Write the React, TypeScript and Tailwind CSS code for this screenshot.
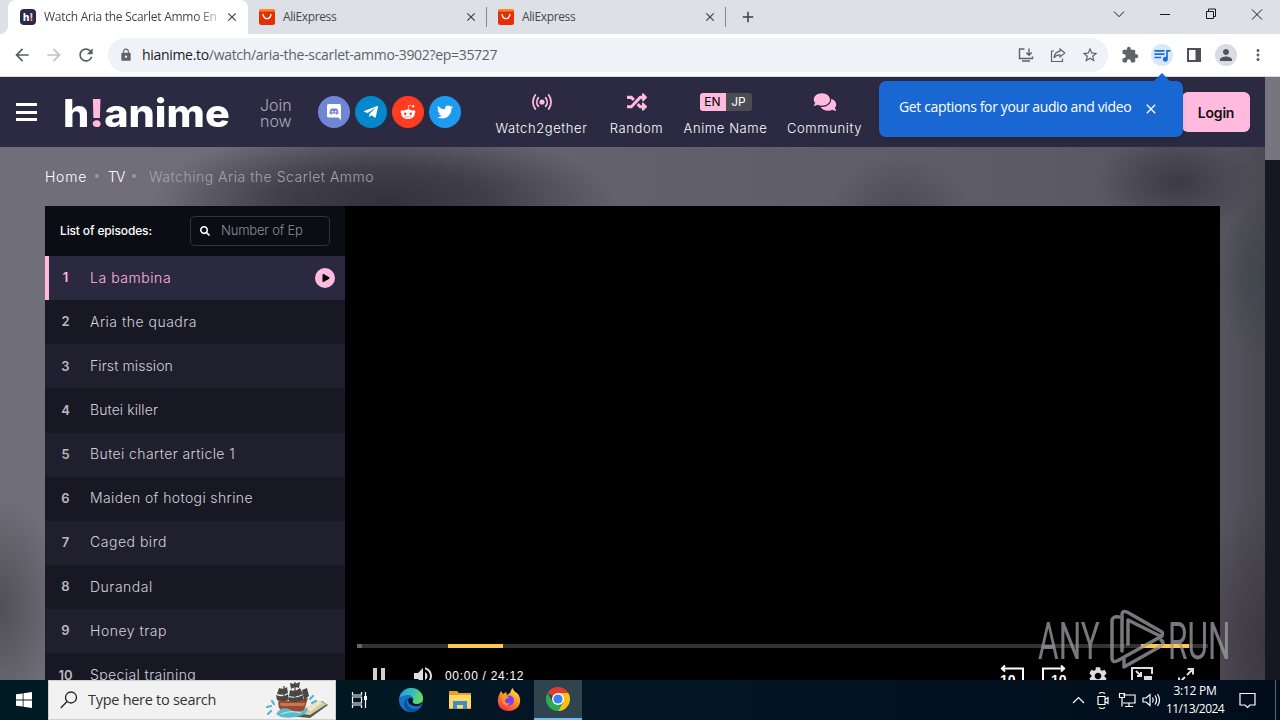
import type { ReactNode } from "react";
import { FaTelegramPlane, FaRedditAlien, FaTwitter, FaRandom, FaComments, FaSearch, FaPlay } from "react-icons/fa";
import { MdLock, MdStarBorder, MdExtension, MdQueueMusic, MdPerson, MdMoreVert, MdClose, MdArrowBack, MdArrowForward, MdRefresh, MdAdd, MdSettings, MdVolumeUp } from "react-icons/md";

const ui = "font-['Open_Sans','Noto_Sans',sans-serif]";
const site = "font-['Inter','Lato',sans-serif]";

const episodes = [
  { n: 1, title: "La bambina", track: "tracking-[0.55px]" },
  { n: 2, title: "Aria the quadra", track: "tracking-[0.5px]" },
  { n: 3, title: "First mission", track: "tracking-[0.1px]" },
  { n: 4, title: "Butei killer", track: "tracking-[0.08px]" },
  { n: 5, title: "Butei charter article 1", track: "tracking-[0.4px]" },
  { n: 6, title: "Maiden of hotogi shrine", track: "tracking-[0.38px]" },
  { n: 7, title: "Caged bird", track: "tracking-[0.52px]" },
  { n: 8, title: "Durandal", track: "tracking-[0.52px]" },
  { n: 9, title: "Honey trap", track: "tracking-[0.52px]" },
  { n: 10, title: "Special training", track: "tracking-[0.4px]" },
];

function T({ c = "", children }: { c?: string; children: ReactNode }) {
  return <span className={`inline-block whitespace-nowrap ${c}`}>{children}</span>;
}

function AliIcon() {
  return (
    <svg width="16" height="16" viewBox="0 0 16 16" className="shrink-0">
      <rect width="16" height="16" rx="2.5" fill="#e62e04" />
      <path d="M2.500 0h11A2.500 2.500 0 0 1 16 2.500V3.500H0V2.500A2.500 2.500 0 0 1 2.500 0Z" fill="#f58a1f" />
      <path d="M0 2.500h16v4H0z" fill="#e62e04" />
      <path d="M4 5.500c.6 2.800 2.200 4.200 4 4.200s3.400-1.400 4-4.200" fill="none" stroke="#fff" strokeWidth="1.300" strokeLinecap="round" />
    </svg>
  );
}

function Tab() {
  return (
    <div className="flex h-[34px] w-[239px] shrink-0 items-center pl-[11px]">
      <AliIcon />
      <div className="ml-2 w-[180px] text-[12px] text-[#45484d]"><T c="tracking-[-0.38px]">AliExpress</T></div>
      <MdClose className="ml-[1px] size-[14px] shrink-0 text-[#3c4043]" />
      <div className="ml-[8px] h-5 w-px bg-[#85888d]" />
    </div>
  );
}

function TabStrip() {
  return (
    <div className="flex h-[34px] bg-[#dde0e6]">
      <div className="flex w-2 items-end bg-white"><div className="h-full w-2 rounded-br-lg bg-[#dde0e6]" /></div>
      <div className="flex h-[34px] w-[240px] items-center rounded-t-lg bg-white pl-3">
        <div className="flex size-4 items-center justify-center rounded-[4px] bg-[#2b2943] font-['Inter',sans-serif] text-[10px] leading-none font-extrabold text-white">
          h<span className="text-[#ffbade]">!</span>
        </div>
        <div className={`ml-2 w-[174px] bg-gradient-to-r from-[#3c4043] from-88% to-[#3c404340] bg-clip-text text-[12px] text-transparent ${ui}`}>
          <T c="tracking-[-0.26px]">Watch Aria the Scarlet Ammo En</T>
        </div>
        <MdClose className="ml-[7px] size-[14px] text-[#3c4043]" />
      </div>
      <div className={`flex bg-[#dde0e6] ${ui}`}><Tab /><Tab /></div>
      <div className="flex flex-1 items-center pl-[13px]"><MdAdd className="size-[18px] text-[#3c4043]" /></div>
      <svg width="180" height="28" viewBox="0 0 180 28" fill="none" stroke="#1a1a1a" className="shrink-0">
        <path d="M14 11.500l5 5.200 5-5.200M60 14.500h10" />
        <path d="M106.500 11.500h7v7h-7zM108.500 11.500v-2.500h7v7.500h-2" />
        <path d="M152 9.500l10 10M162 9.500l-10 10" />
      </svg>
    </div>
  );
}

function Toolbar() {
  return (
    <div className={`flex h-[42px] items-center bg-white ${ui}`}>
      <MdArrowBack className="ml-3 size-5 text-[#5a5d61]" />
      <MdArrowForward className="ml-3 size-5 text-[#bfc1c3]" />
      <MdRefresh className="ml-3 size-5 text-[#5a5d61]" />
      <div className="ml-3 flex h-[34px] w-[1000px] items-center rounded-full bg-[#eff2f6] pl-[11px]">
        <MdLock className="size-[14px] text-[#5f6368]" />
        <div className="ml-[9px] w-[876px] text-[14px] leading-5 text-[#5f6368]">
          <T c="tracking-[-0.31px]"><span className="text-[#202124]">hianime.to</span>/watch/aria-the-scarlet-ammo-3902?ep=35727</T>
        </div>
        <svg width="16" height="16" viewBox="0 0 16 16" fill="none" stroke="#5f6368" strokeWidth="1.400" className="shrink-0">
          <path d="M6.500 2H1.500v9.500h13V9.500M11 1.500V8M8.200 5.500L11 8.200l2.800-2.700M4 14h8" />
        </svg>
        <svg width="16" height="16" viewBox="0 0 16 16" fill="none" stroke="#5f6368" strokeWidth="1.200" className="ml-4 shrink-0">
          <path d="M4 4H1.500v10.500h11V11.500M10 2l4.800 4L10 10V7.800C7.500 7.800 5.500 8.500 4 11c.4-4 2.500-6.300 6-6.800z" />
        </svg>
        <MdStarBorder className="ml-[15px] size-[18px] shrink-0 text-[#5f6368]" />
      </div>
      <MdExtension className="ml-[13px] size-[18px] text-[#5f6368]" />
      <div className="ml-3 flex size-[22px] items-center justify-center rounded-full bg-[#d9e7fb]"><MdQueueMusic className="size-5 text-[#1a6dd8]" /></div>
      <svg width="14" height="14" viewBox="0 0 14 14" className="ml-[14px]"><path d="M0 0h14v14H0zM2 2v10h6.500V2z" fill="#4d5155" fillRule="evenodd" /></svg>
      <div className="ml-[14px] flex size-[22px] items-center justify-center rounded-full bg-[#dadce3]"><MdPerson className="size-[18px] text-[#4e5364]" /></div>
      <MdMoreVert className="ml-3 size-[18px] text-[#5f6368]" />
    </div>
  );
}

function NavItem({ icon, label, cls }: { icon: ReactNode; label: string; cls: string }) {
  return (
    <div className={`flex shrink-0 flex-col items-center pt-[15px] ${cls}`}>
      <div className="flex h-5 items-center text-[#ffbade]">{icon}</div>
      <div className="mt-[6px] text-[13px] leading-5 font-light tracking-[0.6px] text-white"><T>{label}</T></div>
    </div>
  );
}

function SiteHeader() {
  return (
    <header className={`flex h-[70px] w-[1265px] shrink-0 items-start bg-[#2c2a42] ${site}`}>
      <div className="mt-[26px] ml-4 flex h-[18px] w-[21px] flex-col justify-between">
        <div className="h-[3px] bg-white" /><div className="h-[3px] bg-white" /><div className="h-[3px] bg-white" />
      </div>
      <div className="mt-[13px] ml-[26px] w-[168px] text-[38px] leading-[46px] font-extrabold text-white">
        <T c="origin-left scale-x-[1.09]">h<span className="text-[#ffbade]">!</span>anime</T>
      </div>
      <div className="mt-[20px] ml-[29px] flex w-[58px] flex-col items-start text-[16px] leading-4 font-light text-[#aaa9b5]"><T>Join</T><T>now</T></div>
      <div className="mt-[19px] flex gap-[5px] text-white">
        <div className="flex size-8 items-center justify-center rounded-full bg-[#6f85d5]">
          <svg width="16" height="16" viewBox="0 0 16 16"><path d="M2.500 0h11A1.500 1.500 0 0 1 15 1.500V16l-3-2.500H2.500A1.500 1.500 0 0 1 1 12V1.500A1.500 1.500 0 0 1 2.500 0Z" fill="#fff" /><path d="M3.500 9.500c0-2 .6-3.600 1.300-4.600 1-.6 1.600-.6 2-.3h2.400c.4-.3 1-.3 2 .3.700 1 1.300 2.600 1.300 4.600-1 1-2 1-2.500.8L9.500 9.500h-3l-.5.800c-.5.200-1.500.2-2.500-.8Z" fill="#6f85d5" /><circle cx="6.400" cy="7.700" r=".9" fill="#fff" /><circle cx="9.600" cy="7.700" r=".9" fill="#fff" /></svg>
        </div>
        <div className="flex size-8 items-center justify-center rounded-full bg-[#0488cc]"><FaTelegramPlane className="size-4" /></div>
        <div className="flex size-8 items-center justify-center rounded-full bg-[#ff3c1f]"><FaRedditAlien className="size-4" /></div>
        <div className="flex size-8 items-center justify-center rounded-full bg-[#1d9bf0]"><FaTwitter className="size-4" /></div>
      </div>
      <NavItem cls="ml-[33px] w-[95px]" label="Watch2gether" icon={
        <svg width="20" height="16" viewBox="0 0 20 16" fill="none" stroke="#ffbade" strokeWidth="1.800" strokeLinecap="round">
          <circle cx="10" cy="8" r="2.600" fill="#ffbade" stroke="none" />
          <path d="M6.300 3.800c-2 2.400-2 6 0 8.400M13.700 3.800c2 2.400 2 6 0 8.400M3.300 1c-3.100 4-3.100 10 0 14M16.700 1c3.100 4 3.100 10 0 14" />
        </svg>} />
      <NavItem cls="ml-[19px] w-[57px]" label="Random" icon={<FaRandom className="size-5" />} />
      <NavItem cls="ml-[18px] w-[85px]" label="Anime Name" icon={
        <div className="flex h-[18px] overflow-hidden rounded-[3px] text-[12px] leading-[18px]">
          <div className="w-[26px] bg-[#ffbade] text-center text-black">EN</div>
          <div className="w-[26px] bg-[#4a4d52] text-center text-white">JP</div>
        </div>} />
      <NavItem cls="ml-[18px] w-[77px]" label="Community" icon={<FaComments className="h-5 w-6" />} />
      <div className="mt-[15px] ml-[319px] flex h-10 w-[68px] shrink-0 items-center justify-center rounded-[6px] bg-[#ffbade] text-[14px] font-semibold text-[#111]"><T c="tracking-[-0.2px]">Login</T></div>
    </header>
  );
}

function CaptionTip() {
  return (
    <div className={`absolute top-[81px] left-[879px] flex h-14 w-[304px] rounded-[7px] bg-[#1967d2] pl-5 text-white shadow-md ${ui}`}>
      <svg width="18" height="9" viewBox="0 0 18 9" className="absolute -top-[8px] left-[274px]"><path d="M9 0l9 9H0z" fill="#1967d2" /></svg>
      <div className="mt-4 w-[244px] text-[14px] leading-5"><T c="tracking-[-0.37px]">Get captions for your audio and video</T></div>
      <MdClose className="mt-5 size-4" />
    </div>
  );
}

function Sidebar() {
  return (
    <aside className="w-[300px] shrink-0">
      <div className="flex h-[50px] items-center bg-[#0b0d15] pl-[15px]">
        <div className="w-[130px] text-[12px] font-medium text-white"><T c="tracking-[-0.14px]">List of episodes:</T></div>
        <div className="flex h-[30px] w-[140px] items-center rounded-[5px] border border-[#32343c] pl-[9px]">
          <FaSearch className="size-[10px] text-white" />
          <div className="ml-[11px] text-[13px] font-light text-[#8d8e94]"><T c="tracking-[-0.2px]">Number of Ep</T></div>
        </div>
      </div>
      {episodes.map((e) => {
        const on = e.n === 1;
        return (
          <div key={e.n} className={`flex h-[44.150px] items-center text-[14px] ${on ? "bg-[#2b2940] text-[#ffbade]" : e.n % 2 ? "bg-[#201f2d] text-[#d2d1d8]" : "bg-[#181824] text-[#d2d1d8]"}`}>
            <div className={`h-full w-1 ${on ? "bg-[#ffbade]" : ""}`} />
            <div className={`w-8 pl-px text-center text-[13px] font-semibold ${on ? "" : "text-[#b9b8c0]"}`}>{e.n}</div>
            <div className="ml-[9px] flex-1 pb-px leading-5 font-light"><T c={e.track}>{e.title}</T></div>
            {on && <div className="mr-[10px] flex size-5 items-center justify-center rounded-full bg-[#ffbade]"><FaPlay className="ml-[2px] size-2 text-black" /></div>}
          </div>
        );
      })}
    </aside>
  );
}

function Player() {
  return (
    <div className="flex flex-1 flex-col bg-black">
      <div className="h-[438px] shrink-0" />
      <div className="ml-3 flex h-[4px] w-[851px] shrink-0 bg-[#333]">
        <div className="h-full w-[5px] bg-[#666]" />
        <div className="ml-[86px] h-full w-[55px] bg-[#fdca48]" />
        <div className="ml-[638px] h-full w-12 bg-[#fdca48]" />
      </div>
      <div className="mt-[16px] flex h-6 shrink-0 items-center text-[#dedede]">
        <svg width="12" height="16" viewBox="0 0 12 16" className="ml-7" fill="#d0d0d0"><path d="M0 0h4v16H0zM8 0h4v16H8z" /></svg>
        <MdVolumeUp className="ml-[26px] size-6" />
        <div className="ml-[10px] w-[79px] font-['Liberation_Sans',sans-serif] text-[12px] text-white"><T c="tracking-[0.7px]">00:00 / 24:12</T></div>
        <div className="flex-1" />
        <svg width="26" height="24" viewBox="0 0 26 24" fill="none" stroke="#fff" strokeWidth="2"><path d="M6 1.500L3 4.500 6 7.500M2 4.500h22V20" /><text x="1" y="21" fill="#fff" stroke="none" fontSize="14" fontWeight="700" fontFamily="Liberation Sans">10</text></svg>
        <svg width="26" height="24" viewBox="0 0 26 24" fill="none" stroke="#fff" strokeWidth="2" className="ml-4"><path d="M20 1.500l3 3-3 3M24 4.500H2V20" /><text x="10" y="21" fill="#fff" stroke="none" fontSize="14" fontWeight="700" fontFamily="Liberation Sans">10</text></svg>
        <MdSettings className="ml-[20px] size-[22px] text-[#ddd]" />
        <svg width="22" height="20" viewBox="0 0 22 20" fill="none" stroke="#ddd" strokeWidth="2" className="ml-[22px]"><path d="M21 8V2H1v16h10M5 5l5 5M10 6v4H6" /><path d="M13 10h8v6h-8z" fill="#ddd" stroke="none" /></svg>
        <svg width="18" height="18" viewBox="0 0 18 18" fill="none" stroke="#ddd" strokeWidth="2" className="mr-[25px] ml-6"><path d="M10 8l6-6M10.500 2H16v5.500M8 10l-6 6M2 10.500V16h5.500" /></svg>
      </div>
    </div>
  );
}

function Watermark() {
  return (
    <div className="absolute top-[611px] left-[1038px] flex h-[60px] w-[194px] items-center text-[#a0a0a3] opacity-75">
      <div className="w-[68px] font-['Roboto',sans-serif] text-[51px] leading-none"><T c="origin-left scale-x-[.620]">ANY</T></div>
      <svg width="60" height="62" viewBox="0 0 60 62" fill="none" stroke="#a0a0a3" strokeWidth="3.500" strokeLinejoin="round" strokeLinecap="round" className="absolute top-[-2px] left-[70px]">
        <path d="M11 8Q4 7 4 12V49Q4 54 9 52L54 27" /><path d="M14 42V6Q14 1 19 3L54 23Q56 26 52 27L20 11V35" /><path d="M16 50V58L53 37Q57 34 53 31" />
      </svg>
      <div className="ml-[62px] w-[64px] font-['Roboto',sans-serif] text-[51px] leading-none"><T c="origin-left scale-x-[.620]">RUN</T></div>
    </div>
  );
}

function Ship() {
  return (
    <svg width="64" height="38" viewBox="0 0 64 38">
      <path d="M22 35L44 37 62 24 56 20 42 27z" fill="#4e5d43" /><path d="M28 32l16 2 17-11-8-3-13 7z" fill="#d8cba6" /><path d="M40 28l13-8 4 1-12 9z" fill="#efe6c6" />
      <path d="M13 27Q11 20 14 17L22 20 42 17 38 30 18 32z" fill="#9a4a32" /><path d="M14 22l25 0-1 3-23 0z" fill="#c47a4d" />
      <path d="M10 33Q16 24 25 29T41 26Q44 32 34 35T15 36z" fill="#5cb9cd" /><path d="M15 33q10-4 20-1" stroke="#c7edf2" fill="none" />
      <path d="M18 5v15M29 1v20M39 8v12" stroke="#4b3a34" strokeWidth="1.200" />
      <path d="M13 7q5 2 8-1l1 6q-5 3-11 1zM10 14q7 3 12-1l1 6q-6 2-12 0zM24 2q5 2 10-1l-1 6q-4-2-8 1zM24 9q6 2 10-2l3 6q-7 4-14 2zM23 16q7 2 14-2l0 5q-7 3-14 1zM36 9l5-2 2 8-5 4z" fill="#4b4743" />
      <path d="M1 26l4-1M5 30l-3 3M44 18l3-3M46 22l4-2M8 23l-2-3" stroke="#58b4d0" strokeWidth="2.200" strokeLinecap="round" />
    </svg>
  );
}

function Taskbar() {
  return (
    <div className={`flex h-10 w-[1280px] items-center bg-gradient-to-r from-[#001a23] via-[#021623] to-[#020d1c] ${ui}`}>
      <svg width="16" height="16" viewBox="0 0 16 16" className="ml-4" fill="#fff"><path d="M0 2.300L6.700 1.400V7.600H0zM7.500 1.200L16 0V7.600H7.500zM0 8.400H6.700V14.600L0 13.700zM7.500 8.400H16V16L7.500 14.800z" /></svg>
      <div className="ml-4 flex h-10 w-72 items-center border border-[#cfcfcf] bg-[#f2f2f2] pl-[11px]">
        <svg width="18" height="18" viewBox="0 0 18 18" fill="none" stroke="#222" strokeWidth="1.300" className="shrink-0"><circle cx="11" cy="6.500" r="5.500" /><path d="M7 10.500L.8 17" /></svg>
        <div className="ml-[10px] w-[178px] text-[14.500px] text-[#333]"><T c="tracking-[-0.28px]">Type here to search</T></div>
        <Ship />
      </div>
      <svg width="18" height="18" viewBox="0 0 18 18" fill="none" stroke="#fff" strokeWidth="1.200" className="ml-[15px]"><path d="M1.500 1v3h9V1M1.500 17v-3h9v3M1.500 6h9v6h-9zM14.500 1v16" /><path d="M13 5h3v4h-3z" fill="#fff" stroke="none" /></svg>
      <svg width="26" height="26" viewBox="0 0 26 26" className="ml-[29px]">
        <defs><linearGradient id="eg" x1="0" y1="0" x2="1" y2=".3"><stop offset="0" stopColor="#2196d9" /><stop offset=".6" stopColor="#35c1b9" /><stop offset="1" stopColor="#66d85c" /></linearGradient></defs>
        <circle cx="13" cy="13" r="12" fill="#1673c8" /><path d="M1.500 10C4 3 9 1 13 1c7 0 12 5 12 10 0 4-3 6-6 6-4 0-5-1.500-4.500-2.500C17 11 14 8 10.500 8 6 8 3 10 1.500 10Z" fill="url(#eg)" />
        <path d="M10 11c-3 5 0 11 7 11 2.500 0 4.500-1 5.500-2-2 3.500-6 5-9.500 5-4-1-7-4-7-8 0-3 2-5 4-6Z" fill="#0c4f9e" /><path d="M10.500 11.500c1.500-1.500 5-.5 4.500 2-1 1.500-.5 3.500 4 3.500 2 0 4-.8 5.500-2.200-.5 3.200-4 5.200-7.500 4.200-5-.5-8-4-6.500-7.500Z" fill="#021623" />
      </svg>
      <svg width="22" height="20" viewBox="0 0 22 20" className="ml-[25px]"><path d="M0 1h8l2 2h12v16H0z" fill="#e5a12a" /><path d="M0 5h22v13H0z" fill="#ffd967" /><path d="M4 11h14v8h-4v-4H8v4H4z" fill="#3b8fc9" /></svg>
      <svg width="24" height="24" viewBox="0 0 24 24" className="ml-[26px]">
        <defs><linearGradient id="ff" x1=".8" y1="0" x2=".2" y2="1"><stop offset="0" stopColor="#ffe14d" /><stop offset=".5" stopColor="#ff8a22" /><stop offset="1" stopColor="#f5244e" /></linearGradient></defs>
        <path d="M4 3l2 3 3-2 1 3 3-2c1-2 1-4 3-5 0 3 3 4 5 6 5 7 1 17-9 17C4 23 0 18 1 11c.3-3 1.500-5 3-8Z" fill="url(#ff)" /><circle cx="12" cy="12.500" r="5" fill="#7b3ff0" /><path d="M5 8c3-2 5 0 7 1-1 2-4 1-4 4 0 2 3 3 5 2-2 4-8 2-8-3z" fill="#ff9329" />
      </svg>
      <div className="ml-[13px] flex h-10 w-12 items-center justify-center border-b-2 border-[#76b9ed] bg-[#2f444f]">
        <svg width="24" height="24" viewBox="0 0 24 24"><path d="M12 12L1.600 6A12 12 0 0 1 22.400 6z" fill="#e33b2e" /><path d="M12 12V6H22.400A12 12 0 0 1 12 24L17.200 15z" fill="#fbc116" /><path d="M12 12l5.200 3L12 24A12 12 0 0 1 1.600 6L6.800 15z" fill="#2da94f" /><circle cx="12" cy="12" r="6" fill="#fff" /><circle cx="12" cy="12" r="4.600" fill="#3f7ff0" /></svg>
      </div>
      <div className="flex-1" />
      <svg width="92" height="20" viewBox="0 0 92 20" fill="none" stroke="#fff" strokeWidth="1.200">
        <path d="M1 13l5.500-5.500L12 13" />
        <path d="M26 6.500h7v8h-7zM33 9.500l3-2v6l-3-2M27 3.500q3-2 6 0M27 17.500q3 2 6 0" />
        <path d="M51 5h12v8H51M57 13v3M53 16.500h8M47.500 3.500h5v4h-5zM50 7.500v9" />
        <path d="M71 8h3l4-3.500v11L74 12h-3zM80.500 7.500q1.500 2.500 0 5M83 5.500q3 4.500 0 9M85.500 4q4 6 0 12" />
      </svg>
      <div className="ml-px flex w-[60px] flex-col items-center text-[12px] leading-[18px] text-white"><T c="tracking-[-0.25px]">3:12 PM</T><T c="tracking-[-0.55px]">11/13/2024</T></div>
      <svg width="17" height="17" viewBox="0 0 17 17" fill="none" stroke="#fff" strokeWidth="1.200" className="mr-[19px] ml-[14px]"><path d="M1 1.500h15V13h-5l-2.500 2.500L6 13H1z" /></svg>
      <div className="mr-1 h-10 w-px bg-[#5a6670]" />
    </div>
  );
}

export default function App() {
  return (
    <div className="relative flex h-[720px] w-[1280px] flex-col overflow-hidden">
      <TabStrip />
      <Toolbar />
      <div className="h-px bg-[#d8dae0]" />
      <div className="flex h-[603px]">
        <div className="flex w-[1265px] flex-col overflow-hidden bg-[#65636d]">
          <SiteHeader />
          <main className={`flex h-[533px] flex-col bg-[radial-gradient(ellipse_230px_75px_at_385px_55px,#33323c_0%,#403f49_45%,transparent_100%),radial-gradient(ellipse_80px_50px_at_1178px_35px,#3c3a44,transparent),radial-gradient(ellipse_70px_60px_at_900px_70px,#4b4953,transparent),radial-gradient(ellipse_60px_110px_at_0px_460px,#504f58,transparent),radial-gradient(ellipse_45px_80px_at_1265px_130px,#40464d,transparent),radial-gradient(ellipse_80px_150px_at_1265px_500px,#3c3943,transparent),linear-gradient(to_right,#706e78_0%,#706e78_10%,#62606b_50%,#5d5b66_80%,#55535d_97%,#4a4851_100%)] ${site}`}>
            <div className="flex h-[59px] items-center pb-px pl-[45px] text-[14px]">
              <div className="w-[50px] text-white"><T c="tracking-[0.75px] font-light">Home</T></div>
              <div className="size-1 rounded-full bg-[#9a99a1]" />
              <div className="ml-[9px] w-[24px] text-white"><T c="tracking-[-0.8px] font-light">TV</T></div>
              <div className="size-1 rounded-full bg-[#9a99a1]" />
              <div className="ml-[13px] font-light text-[#a4a3aa]"><T c="tracking-[0.51px]">Watching Aria the Scarlet Ammo</T></div>
            </div>
            <div className="ml-[45px] flex h-[474px] w-[1175px] overflow-hidden"><Sidebar /><Player /></div>
          </main>
        </div>
        <div className="w-[15px] bg-[#151722]"><div className="h-[83px] bg-[#777580]" /></div>
      </div>
      <Taskbar />
      <CaptionTip />
      <Watermark />
    </div>
  );
}
